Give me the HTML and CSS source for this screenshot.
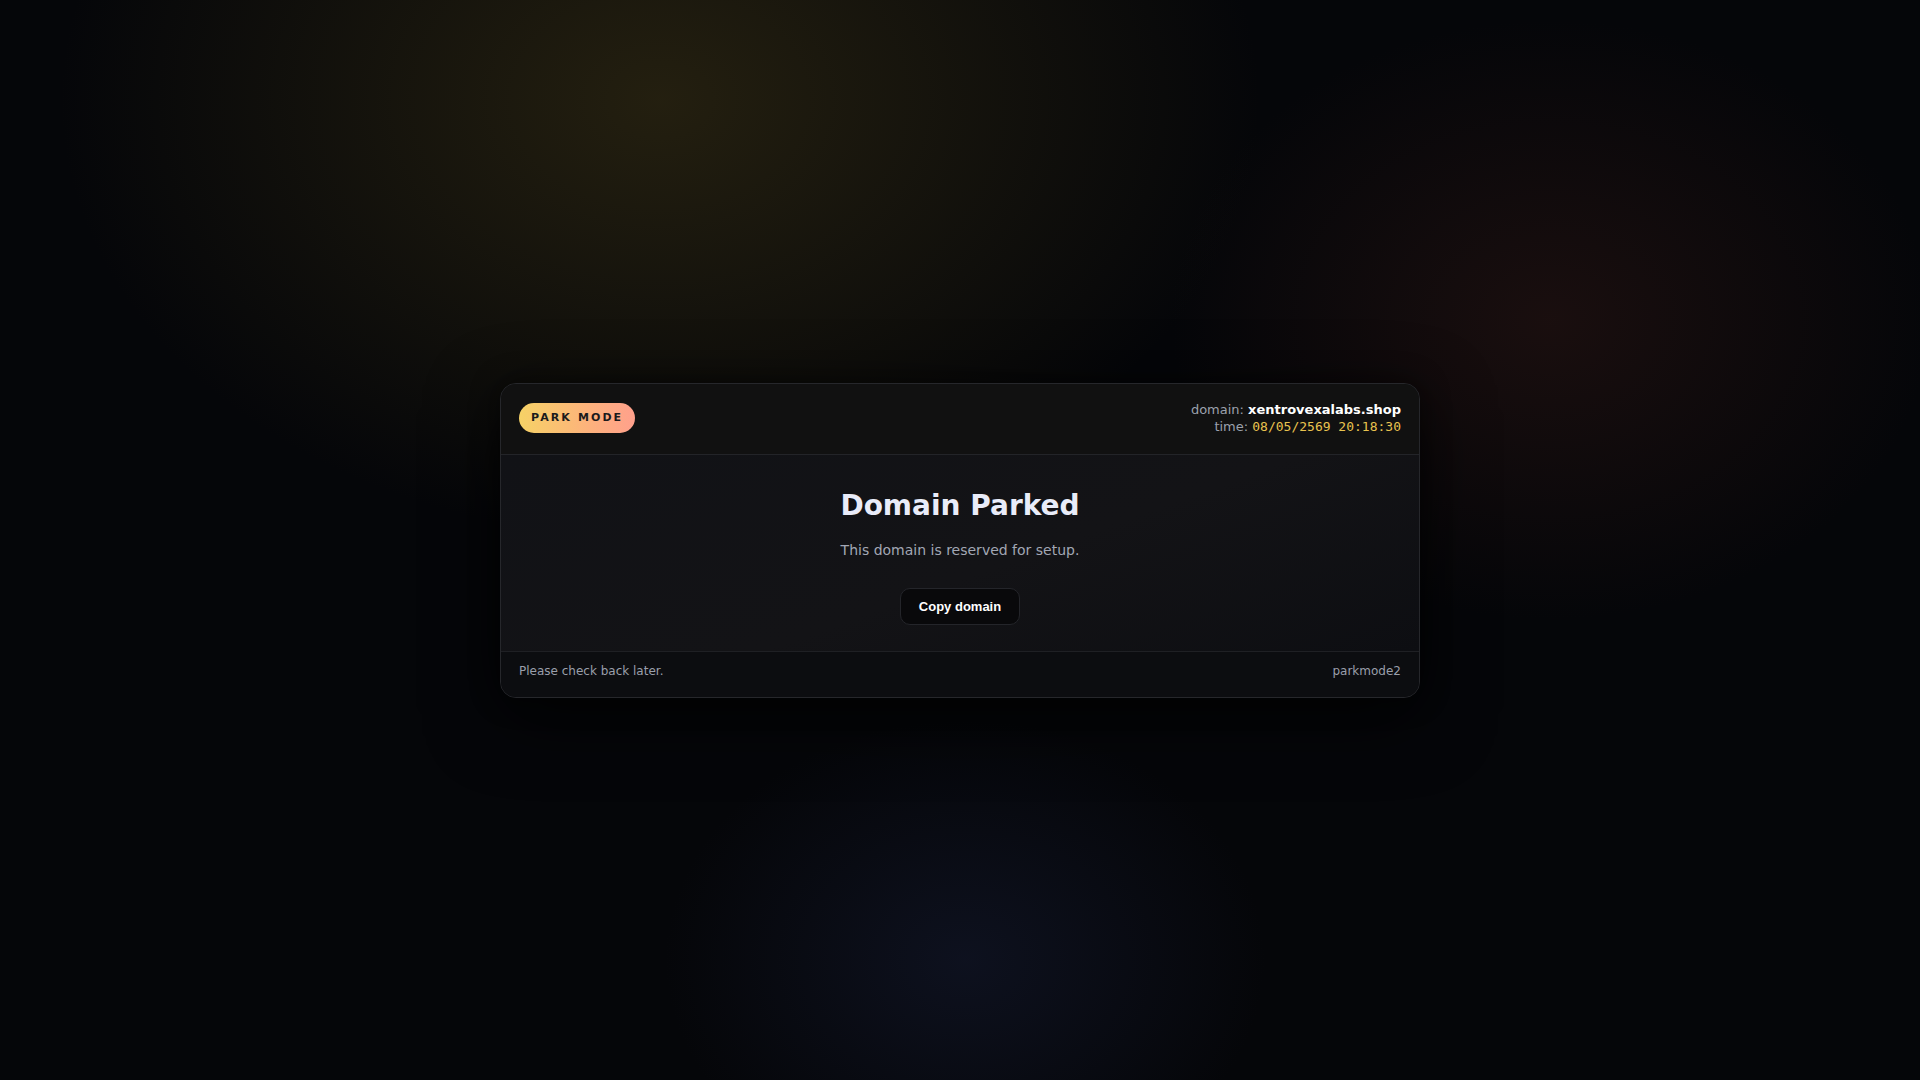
FILE: index.html
```html
<!DOCTYPE html>
<html lang="en">
<head>
<meta charset="utf-8">
<title>Domain Parked</title>
<link rel="stylesheet" href="styles.css">
</head>
<body>
<main class="stage">
  <section class="card">
    <header class="card-head">
      <span class="badge">PARK MODE</span>
      <div class="meta">
        <div class="meta-line">domain: <strong class="meta-domain">xentrovexalabs.shop</strong></div>
        <div class="meta-line">time: <span class="meta-time">08/05/2569 20:18:30</span></div>
      </div>
    </header>
    <div class="card-body">
      <h1 class="title">Domain Parked</h1>
      <p class="subtitle">This domain is reserved for setup.</p>
      <button class="copy-btn" type="button">Copy domain</button>
    </div>
    <footer class="card-foot">
      <span>Please check back later.</span>
      <span>parkmode2</span>
    </footer>
  </section>
</main>
</body>
</html>
```

FILE: styles.css
```css
html, body {
  margin: 0;
  padding: 0;
  height: 100%;
}

body {
  font-family: "DejaVu Sans", "Noto Sans", sans-serif;
  color: #e8ecf8;
  background-color: #050609;
  background-image:
    radial-gradient(ellipse 600px 440px at 660px 100px, rgba(66, 56, 22, 0.5), rgba(66, 56, 22, 0) 100%),
    radial-gradient(ellipse 380px 300px at 1550px 320px, rgba(54, 26, 22, 0.42), rgba(54, 26, 22, 0) 100%),
    radial-gradient(ellipse 300px 240px at 965px 960px, rgba(22, 28, 52, 0.5), rgba(22, 28, 52, 0) 100%);
}

.stage {
  height: 100%;
  display: flex;
  align-items: center;
  justify-content: center;
}

.card {
  width: 918px;
  border: 1px solid #26272b;
  border-radius: 16px;
  overflow: hidden;
  background: linear-gradient(180deg, #111114 0%, #0c0d10 100%);
  box-shadow: 0 20px 70px rgba(0, 0, 0, 0.7), 0 0 30px rgba(0, 0, 0, 0.45);
}

.card-head {
  display: flex;
  align-items: center;
  justify-content: space-between;
  padding: 17px 18px 19px;
  background: #111111;
  border-bottom: 1px solid #232428;
}

.badge {
  display: inline-block;
  padding: 8px 12px 8px 12px;
  border-radius: 999px;
  background: linear-gradient(90deg, #f6d266 0%, #fdb27c 60%, #ffa08c 100%);
  color: #1b1a1c;
  font-weight: bold;
  font-size: 11px;
  line-height: 14px;
  letter-spacing: 2.1px;
}

.meta {
  text-align: right;
  font-size: 13px;
  line-height: 17px;
  color: #9ca1ad;
}

.meta-domain {
  color: #ffffff;
  font-weight: bold;
}

.meta-time {
  font-family: "DejaVu Sans Mono", "Liberation Mono", monospace;
  color: #e9c34f;
  font-size: 13px;
}

.card-body {
  display: flex;
  flex-direction: column;
  align-items: center;
  padding: 34px 18px 26px;
  background: linear-gradient(160deg, #111216 0%, #131316 55%, #0d0e12 100%);
}

.title {
  margin: 0;
  font-size: 28px;
  line-height: 34px;
  font-weight: bold;
  color: #e9ecf9;
}

.subtitle {
  margin: 17px 0 0;
  font-size: 14px;
  line-height: 20px;
  color: #a2a7b4;
}

.copy-btn {
  margin-top: 28px;
  padding: 10px 18px;
  font-family: "Liberation Sans", Arial, sans-serif;
  font-size: 13px;
  line-height: 15px;
  font-weight: bold;
  color: #ffffff;
  background: #09090b;
  border: 1px solid #24252a;
  border-radius: 10px;
  cursor: pointer;
}

.card-foot {
  display: flex;
  justify-content: space-between;
  align-items: center;
  padding: 11px 18px 18px;
  font-size: 12px;
  line-height: 16px;
  color: #9a9fab;
  background: #0c0d10;
  border-top: 1px solid #1f2024;
}
```
